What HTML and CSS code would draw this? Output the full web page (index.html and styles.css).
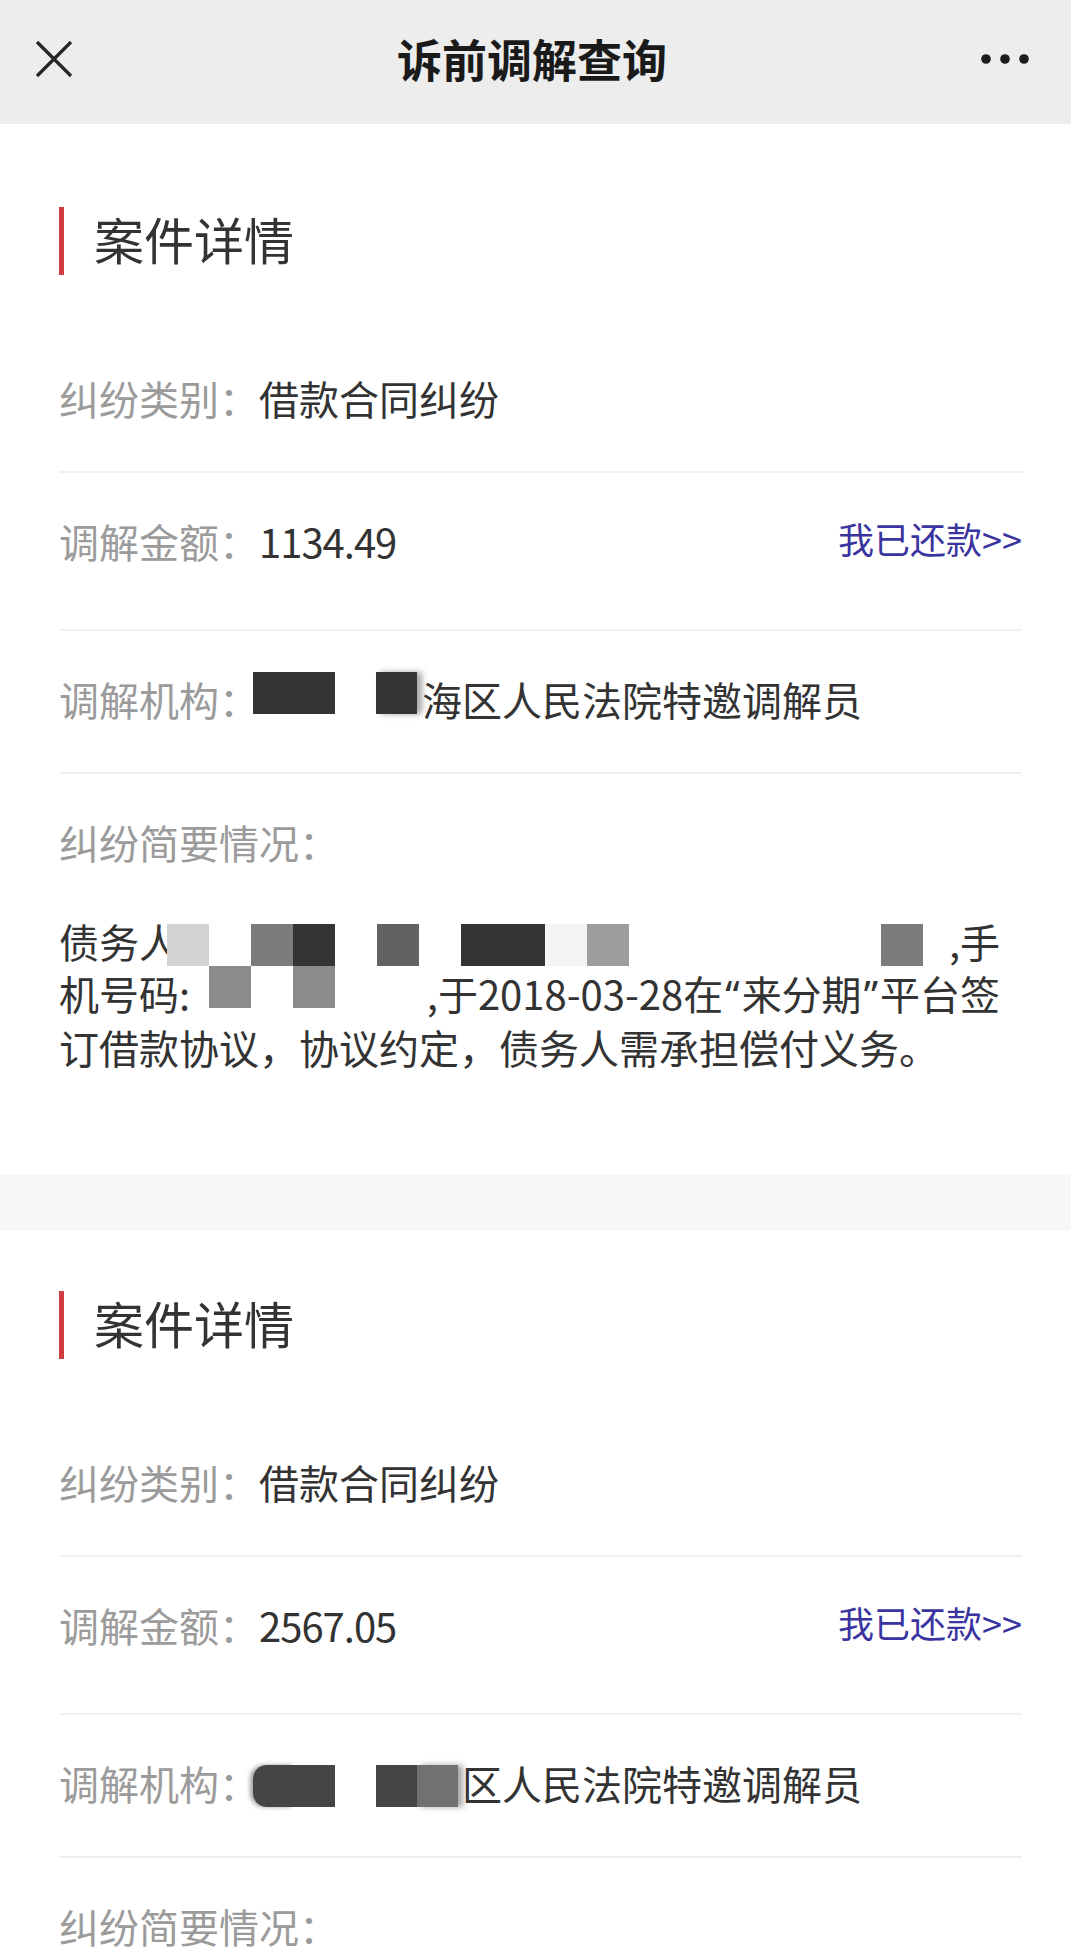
FILE: index.html
```html
<!DOCTYPE html>
<html lang="zh-CN">
<head>
    <meta charset="UTF-8">
    <meta name="viewport" content="width=device-width, initial-scale=1.0">
    <title>诉前调解查询</title>
    <link rel="stylesheet" href="styles.css">
</head>
<body>
    <header class="topbar">
        <button class="icon-btn close" aria-label="关闭">
            <svg width="38" height="38" viewBox="0 0 38 38"><path d="M2 2L36 36M36 2L2 36" stroke="#262626" stroke-width="3.2" fill="none"/></svg>
        </button>
        <h1 class="page-title">诉前调解查询</h1>
        <button class="icon-btn more" aria-label="更多">
            <svg width="48" height="10" viewBox="0 0 48 10" fill="#1c1c1c"><circle cx="5" cy="5" r="4.8"/><circle cx="24" cy="5" r="4.8"/><circle cx="43" cy="5" r="4.8"/></svg>
        </button>
    </header>

    <main>
        <!-- case 1 -->
        <section class="case">
            <h2 class="case-title">案件详情</h2>
            <div class="row">
                <span class="label">纠纷类别：</span>
                <span class="value">借款合同纠纷</span>
            </div>
            <div class="row">
                <span class="label">调解金额：</span>
                <span class="value num">1134.49</span>
                <a class="repay" href="#">我已还款&gt;&gt;</a>
            </div>
            <div class="row">
                <span class="label">调解机构：</span>
                <span class="value"><span class="mosaic mosaic-up"><i class="px-dark"></i><i class="px-dark"></i><i class="px-white"></i><i class="px-dark px-soft"></i></span>海区人民法院特邀调解员</span>
            </div>
            <div class="row row-last">
                <span class="label">纠纷简要情况：</span>
            </div>
            <div class="brief">
                <div class="brief-line"><span>债务人</span><span>,手</span></div>
                <div class="brief-line"><span>机号码:</span><span>,于2018-03-28在<span class="quote">“</span>来分期<span class="quote">”</span>平台签</span></div>
                <div class="brief-line">订借款协议，协议约定，债务人需承担偿付义务。</div>
                <!-- pixelated cover over the debtor's name / id / phone -->
                <div class="brief-mask">
                    <i class="px-light"></i><i class="px-white"></i><i class="px-grey"></i><i class="px-dark"></i><i class="px-white"></i><i class="px-mid"></i><i class="px-white"></i><i class="px-dark"></i><i class="px-dark"></i><i class="px-pale"></i><i class="px-silver"></i><i class="px-white"></i><i class="px-white"></i><i class="px-white"></i><i class="px-white"></i><i class="px-white"></i><i class="px-white"></i><i class="px-grey"></i>
                    <i></i><i class="px-ash"></i><i class="px-white"></i><i class="px-ash"></i><i class="px-white"></i><i class="px-fade"></i>
                </div>
            </div>
        </section>

        <!-- case 2 -->
        <section class="case">
            <h2 class="case-title">案件详情</h2>
            <div class="row">
                <span class="label">纠纷类别：</span>
                <span class="value">借款合同纠纷</span>
            </div>
            <div class="row">
                <span class="label">调解金额：</span>
                <span class="value num">2567.05</span>
                <a class="repay" href="#">我已还款&gt;&gt;</a>
            </div>
            <div class="row">
                <span class="label">调解机构：</span>
                <span class="value"><span class="mosaic"><i class="px-coal px-round"></i><i class="px-coal"></i><i class="px-white"></i><i class="px-coal"></i><i class="px-steel px-soft"></i></span>区人民法院特邀调解员</span>
            </div>
            <div class="row row-last">
                <span class="label">纠纷简要情况：</span>
            </div>
        </section>
    </main>
</body>
</html>
```

FILE: styles.css
```css
body {
    margin: 0;
    padding: 0;
    font-family: "Noto Sans CJK SC", sans-serif;
    background-color: #f7f7f7;
    color: #333;
}

/* top bar */
.topbar {
    display: grid;
    grid-template-columns: 1fr auto 1fr;
    align-items: center;
    height: 124px;
    box-sizing: border-box;
    padding: 0 42px 6px 35px;
    background-color: #ededed;
}
.icon-btn {
    background: none;
    border: none;
    padding: 0;
    display: flex;
    cursor: pointer;
}
.icon-btn.more {
    justify-self: end;
}
.page-title {
    margin: 0;
    font-size: 45px;
    font-weight: 700;
    line-height: 60px;
    color: #1a1a1a;
}

/* case card */
.case {
    background-color: #fff;
    padding: 60px 49px 102px 59px;
    margin-bottom: 56px;
}
.case:first-child {
    padding-top: 83px;
}
.case-title {
    margin: 0 0 55px;
    height: 62px;
    line-height: 62px;
    padding: 0 0 6px 30px;
    border-left: 5px solid #cf3a3e;
    font-size: 50px;
    font-weight: normal;
    color: #333;
}

.row {
    display: flex;
    align-items: flex-start;
    padding: 43px 0 48px;
    border-bottom: 2px solid #f0f0f0;
    font-size: 40px;
    line-height: 50px;
}
.row-last {
    border-bottom: none;
}
.label {
    flex: none;
    color: #9b9b9b;
}
.value {
    color: #333;
    white-space: nowrap;
}
.num {
    letter-spacing: -1px;
}
.repay {
    margin: 1px 0 0 auto;
    font-size: 36px;
    line-height: 42px;
    padding-bottom: 22px;
    color: #3a34a0;
    text-decoration: none;
}

/* mosaic blocks */
.mosaic {
    display: inline-flex;
    vertical-align: top;
    margin: 7px 4px 0 -6px;
}
.mosaic-up {
    margin-top: -2px;
    margin-right: 5px;
}
.mosaic i {
    width: 41px;
    height: 42px;
}
.px-dark { background-color: #343434; }
.px-coal { background-color: #454545; }
.px-mid { background-color: #626262; }
.px-steel { background-color: #717171; }
.px-grey { background-color: #7c7c7c; }
.px-ash { background-color: #8b8b8b; }
.px-silver { background-color: #9d9d9d; }
.px-light { background-color: #d3d3d3; }
.px-pale { background-color: #f4f4f4; }
.px-white { background-color: #fff; }
.px-fade { background-color: rgba(255, 255, 255, 0.8); }
.px-round {
    border-radius: 14px 0 0 14px;
    box-shadow: -3px 0 4px rgba(69, 69, 69, 0.5);
}
.px-soft {
    box-shadow: 5px 0 6px rgba(60, 60, 60, 0.45);
}

/* brief description */
.brief {
    position: relative;
    margin-right: 22px;
    font-size: 40px;
    line-height: 52px;
    color: #333;
}
.brief-line {
    display: flex;
    justify-content: space-between;
}
.quote {
    font-family: "Noto Sans", sans-serif;
    margin: 0 2px;
}
.brief-mask {
    position: absolute;
    left: 108px;
    top: 9px;
    display: grid;
    grid-template-columns: repeat(18, 42px);
    grid-auto-rows: 42px;
}
```
